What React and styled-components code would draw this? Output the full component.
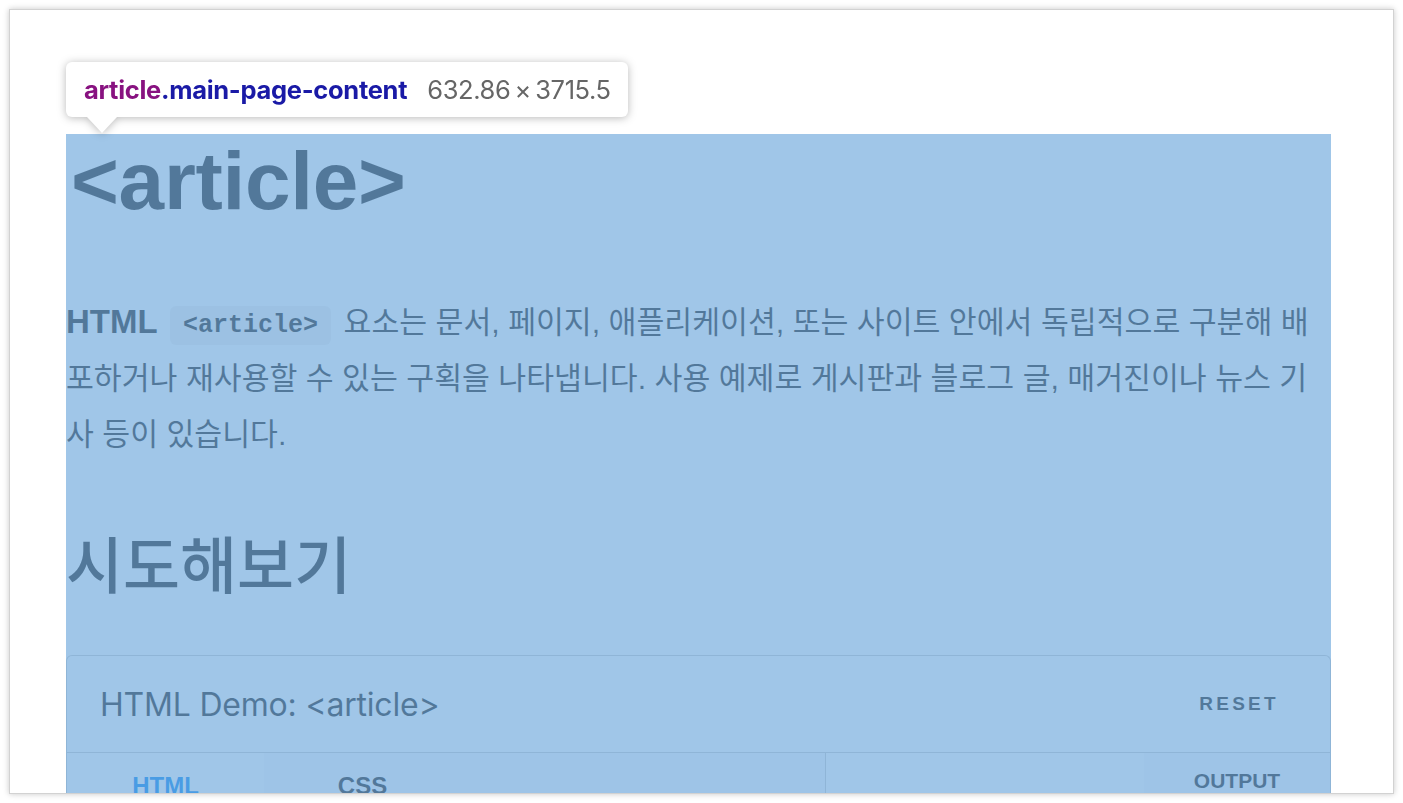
import React from "react";
import styled, { createGlobalStyle } from "styled-components";

const Global = createGlobalStyle`
  * { box-sizing: border-box; }
  html, body { margin: 0; padding: 0; background: #ffffff; }
  body { width: 1403px; height: 803px; overflow: hidden; font-family: "Liberation Sans", Arial, sans-serif; }
`;

const Page = styled.div`
  width: 1403px;
  height: 803px;
  padding: 9px;
  display: flex;
`;

const Frame = styled.div`
  flex: 1;
  background: #ffffff;
  border: 1px solid #d2d2d2;
  box-shadow: 0 0 6px rgba(0, 0, 0, 0.22);
  overflow: hidden;
  padding: 124px 0 0 56px;
`;

const Article = styled.article`
  position: relative;
  width: 1265px;
  color: #1b1b1b;
`;

const Highlight = styled.div`
  position: absolute;
  inset: 0;
  background: rgba(111, 168, 220, 0.66);
  pointer-events: none;
  z-index: 2;
`;

const Tooltip = styled.div`
  position: absolute;
  left: 0;
  top: -72px;
  width: 562px;
  height: 55px;
  padding: 0 18px;
  display: flex;
  align-items: center;
  gap: 20px;
  background: #ffffff;
  border-radius: 6px;
  filter: drop-shadow(0 1px 4px rgba(0, 0, 0, 0.28));
  z-index: 3;
  font-family: "Inter", "Liberation Sans", sans-serif;
  font-size: 25.5px;
  white-space: nowrap;
  &::after {
    content: "";
    position: absolute;
    left: 21px;
    bottom: -16px;
    border-left: 15px solid transparent;
    border-right: 15px solid transparent;
    border-top: 16px solid #ffffff;
  }
`;

const Selector = styled.span`
  font-weight: 700;
  letter-spacing: -0.3px;
`;

const Tag = styled.span`
  color: #881280;
`;

const ClassName = styled.span`
  color: #1a1aa6;
`;

const Dims = styled.span`
  color: #666666;
  font-weight: 400;
  letter-spacing: -0.4px;
`;

const Title = styled.h1`
  margin: 0;
  padding-left: 5px;
  font-family: "Liberation Sans", Arial, sans-serif;
  font-weight: 700;
  font-size: 82px;
  line-height: 94px;
  letter-spacing: -0.3px;
`;

const Lead = styled.p`
  margin: 66px 0 0;
  font-family: "Liberation Sans", "Noto Sans CJK KR", sans-serif;
  font-size: 30.3px;
  line-height: 56px;
  white-space: nowrap;
`;

const Strong = styled.strong`
  font-size: 33px;
`;

const Code = styled.code`
  display: inline-block;
  margin: 0 4px;
  padding: 0 13px;
  height: 39px;
  line-height: 39px;
  vertical-align: 1px;
  border-radius: 6px;
  background: #f2f1f1;
  font-family: "Liberation Mono", monospace;
  font-weight: 700;
  font-size: 25px;
`;

const SubTitle = styled.h2`
  margin: 65px 0 0;
  font-family: "Noto Sans CJK KR", sans-serif;
  font-weight: 500;
  font-size: 62px;
  line-height: 68px;
`;

const Demo = styled.section`
  margin-top: 59px;
  border: 1px solid #cdcdcd;
  border-bottom: none;
  border-radius: 6px 6px 0 0;
  height: 220px;
`;

const DemoHeader = styled.header`
  height: 97px;
  display: flex;
  align-items: center;
  justify-content: space-between;
  padding: 0 51px 0 33px;
  border-bottom: 1px solid #cdcdcd;
`;

const DemoTitle = styled.h3`
  margin: 0;
  font-family: "Inter", "Liberation Sans", sans-serif;
  font-weight: 400;
  font-size: 32px;
  letter-spacing: -0.2px;
`;

const Reset = styled.button`
  border: none;
  background: transparent;
  padding: 0;
  font-family: "Liberation Sans", Arial, sans-serif;
  font-weight: 700;
  font-size: 19px;
  letter-spacing: 3.3px;
  color: #1b1b1b;
`;

const Panes = styled.div`
  display: grid;
  grid-template-columns: 759px 1fr;
  height: 120px;
`;

const Editor = styled.div`
  display: flex;
  align-items: flex-start;
  background: #f9f9fb;
  border-right: 1px solid #cdcdcd;
`;

const Tab = styled.div`
  width: 197px;
  height: 66px;
  display: flex;
  align-items: center;
  justify-content: center;
  background: ${(p) => (p.$active ? "#ffffff" : "transparent")};
  color: ${(p) => (p.$active ? "#0085f2" : "#1b1b1b")};
  font-family: "Liberation Sans", Arial, sans-serif;
  font-weight: 700;
  font-size: 24px;
`;

const Output = styled.div`
  display: flex;
  justify-content: flex-end;
  align-items: flex-start;
  background: #ffffff;
`;

const OutputLabel = styled.div`
  width: 186px;
  height: 56px;
  display: flex;
  align-items: center;
  justify-content: center;
  background: #f9f9fb;
  font-family: "Liberation Sans", Arial, sans-serif;
  font-weight: 700;
  font-size: 21px;
  color: #1b1b1b;
`;

export default function App() {
  return (
    <>
      <Global />
      <Page>
        <Frame>
          <Article>
            <Title>&lt;article&gt;</Title>
            <Lead>
              <Strong>HTML</Strong> <Code>&lt;article&gt;</Code> 요소는 문서, 페이지, 애플리케이션, 또는
              사이트 안에서 독립적으로 구분해 배<br />포하거나 재사용할 수 있는 구획을 나타냅니다. 사용
              예제로 게시판과 블로그 글, 매거진이나 뉴스 기<br />사 등이 있습니다.
            </Lead>
            <SubTitle>시도해보기</SubTitle>
            <Demo>
              <DemoHeader>
                <DemoTitle>HTML Demo: &lt;article&gt;</DemoTitle>
                <Reset>RESET</Reset>
              </DemoHeader>
              <Panes>
                <Editor>
                  <Tab $active>HTML</Tab>
                  <Tab>CSS</Tab>
                </Editor>
                <Output>
                  <OutputLabel>OUTPUT</OutputLabel>
                </Output>
              </Panes>
            </Demo>
            <Highlight />
            <Tooltip>
              <Selector>
                <Tag>article</Tag>
                <ClassName>.main-page-content</ClassName>
              </Selector>
              <Dims>632.86{"\u2009×\u2009"}3715.5</Dims>
            </Tooltip>
          </Article>
        </Frame>
      </Page>
    </>
  );
}
